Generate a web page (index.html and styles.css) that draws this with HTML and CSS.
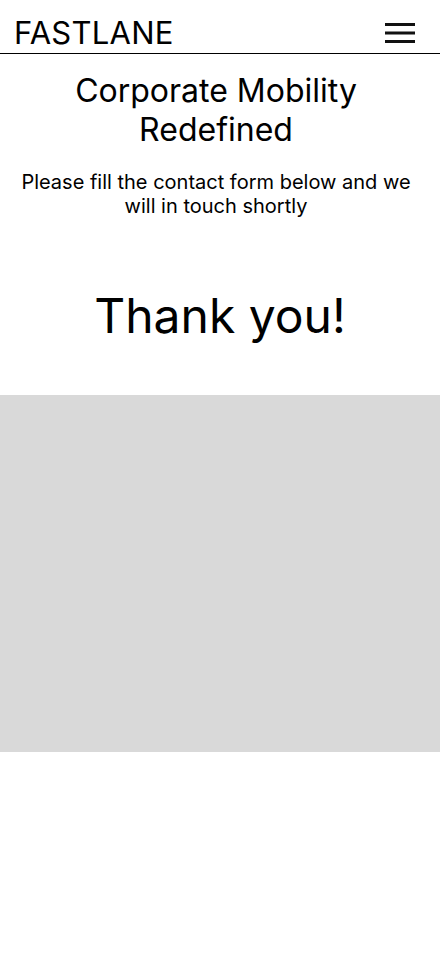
FILE: index.html
```html
<!DOCTYPE html>
<html lang="en">
<head>
<meta charset="utf-8">
<title>Fastlane</title>
<link rel="stylesheet" href="styles.css">
</head>
<body>
<header class="topbar">
  <div class="logo">FASTLANE</div>
  <button class="menu" aria-label="Menu">
    <svg width="30" height="20" viewBox="0 0 30 20"><rect x="0" y="0" width="30" height="3" fill="#111"/><rect x="0" y="8.5" width="30" height="3" fill="#111"/><rect x="0" y="17" width="30" height="3" fill="#111"/></svg>
  </button>
</header>
<main>
  <section class="intro">
    <h1 class="title">Corporate Mobility Redefined</h1>
    <p class="lead">Please fill the contact form below and we will in touch shortly</p>
  </section>
  <section class="thanks">
    <h2 class="thanks-text">Thank you!</h2>
  </section>
  <div class="media"></div>
</main>
</body>
</html>
```
FILE: styles.css
```css
* { box-sizing: border-box; }
html, body { margin: 0; padding: 0; background: #fff; }
body { font-family: Inter, "Noto Sans", sans-serif; color: #000; }
.topbar {
  height: 54px;
  display: flex;
  align-items: flex-start;
  justify-content: space-between;
  padding: 0 25px 0 14px;
  border-bottom: 1px solid #000;
}
.logo { font-size: 31px; font-weight: 400; line-height: 1; letter-spacing: 0.25px; margin-top: 16.5px; }
.menu { background: none; border: 0; padding: 0; display: flex; margin-top: 22.7px; }
.intro { text-align: center; padding: 17px 28px 0 20px; }
.title { font-size: 32px; font-weight: 400; line-height: 39px; margin: 0; }
.lead { font-size: 20px; line-height: 24px; margin: 21px 0 0; }
.thanks { text-align: center; padding: 69px 0 50px; }
.thanks-text { font-size: 48px; font-weight: 400; line-height: 58px; margin: 0; }
.media { height: 357px; background: #d9d9d9; }
```
